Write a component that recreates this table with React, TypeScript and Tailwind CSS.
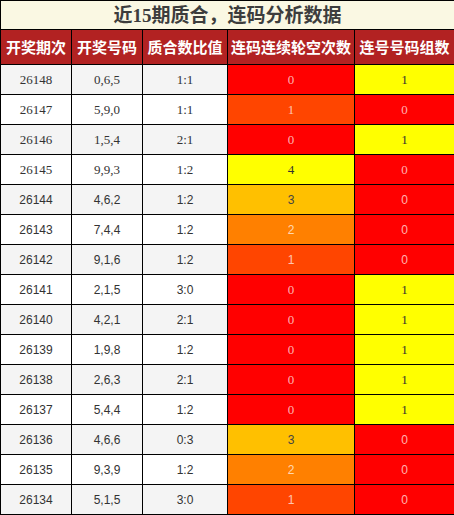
const rows = [
  { id: "26148", nums: "0,6,5", ratio: "1:1", gap: 0, groups: 1 },
  { id: "26147", nums: "5,9,0", ratio: "1:1", gap: 1, groups: 0 },
  { id: "26146", nums: "1,5,4", ratio: "2:1", gap: 0, groups: 1 },
  { id: "26145", nums: "9,9,3", ratio: "1:2", gap: 4, groups: 0 },
  { id: "26144", nums: "4,6,2", ratio: "1:2", gap: 3, groups: 0 },
  { id: "26143", nums: "7,4,4", ratio: "1:2", gap: 2, groups: 0 },
  { id: "26142", nums: "9,1,6", ratio: "1:2", gap: 1, groups: 0 },
  { id: "26141", nums: "2,1,5", ratio: "3:0", gap: 0, groups: 1 },
  { id: "26140", nums: "4,2,1", ratio: "2:1", gap: 0, groups: 1 },
  { id: "26139", nums: "1,9,8", ratio: "1:2", gap: 0, groups: 1 },
  { id: "26138", nums: "2,6,3", ratio: "2:1", gap: 0, groups: 1 },
  { id: "26137", nums: "5,4,4", ratio: "1:2", gap: 0, groups: 1 },
  { id: "26136", nums: "4,6,6", ratio: "0:3", gap: 3, groups: 0 },
  { id: "26135", nums: "9,3,9", ratio: "1:2", gap: 2, groups: 0 },
  { id: "26134", nums: "5,1,5", ratio: "3:0", gap: 1, groups: 0 },
];

// colour per gap count
const gapCell: Record<number, string> = {
  0: "bg-[#ff0000] text-white/70",
  1: "bg-[#ff4500] text-white/70",
  2: "bg-[#ff8000] text-white/70",
  3: "bg-[#ffc000] text-[#444]",
  4: "bg-[#ffff00] text-[#333]",
};

const groupCell: Record<number, string> = {
  0: "bg-[#ff0000] text-white/70",
  1: "bg-[#ffff00] text-[#333]",
};

const headers = ["开奖期次", "开奖号码", "质合数比值", "连码连续轮空次数", "连号号码组数"];

export default function App() {
  return (
    <div className="w-[454px] h-[515px] overflow-hidden bg-white">
      <table className="w-[454px] table-fixed border-collapse border border-black text-center">
        <colgroup>
          <col className="w-[71px]" />
          <col className="w-[71px]" />
          <col className="w-[85px]" />
          <col className="w-[127px]" />
          <col className="w-[100px]" />
        </colgroup>
        <thead>
          <tr className="h-[29px]">
            <th
              colSpan={5}
              className="border border-black bg-[#faf8e3] p-0 text-[19px] font-bold leading-none text-[#3d3d3d] [font-family:'Liberation_Serif','Noto_Sans_CJK_SC',serif]"
            >
              近15期质合，连码分析数据
            </th>
          </tr>
          <tr className="h-[35px] bg-[#b22222]">
            {headers.map((h) => (
              <th
                key={h}
                className="border border-black p-0 text-[15px] font-bold text-white [font-family:'Noto_Sans_CJK_SC',sans-serif]"
              >
                {h}
              </th>
            ))}
          </tr>
        </thead>
        <tbody className="text-[13px]">
          {rows.map((r, i) => {
            const serif = i < 4;
            const font = serif
              ? "[font-family:'Liberation_Serif',serif] text-[13px]"
              : "[font-family:'Liberation_Sans',sans-serif] text-[12px]";
            const colFont =
              i < 4 || (i >= 7 && i <= 11)
                ? "[font-family:'Liberation_Serif',serif] text-[13px]"
                : "[font-family:'Liberation_Sans',sans-serif] text-[12px]";
            const stripe = i % 2 === 0 ? "bg-[#f4f4f4]" : "bg-white";
            return (
              <tr key={r.id} className="h-[30px]">
                <td className={`border border-black p-0 text-[#333] ${stripe} ${font}`}>{r.id}</td>
                <td className={`border border-black p-0 text-[#333] ${stripe} ${font}`}>{r.nums}</td>
                <td className={`border border-black p-0 text-[#333] ${stripe} ${font}`}>{r.ratio}</td>
                <td className={`border border-black p-0 ${gapCell[r.gap]} ${colFont}`}>{r.gap}</td>
                <td className={`border border-black p-0 ${groupCell[r.groups]} ${colFont}`}>{r.groups}</td>
              </tr>
            );
          })}
        </tbody>
      </table>
    </div>
  );
}
